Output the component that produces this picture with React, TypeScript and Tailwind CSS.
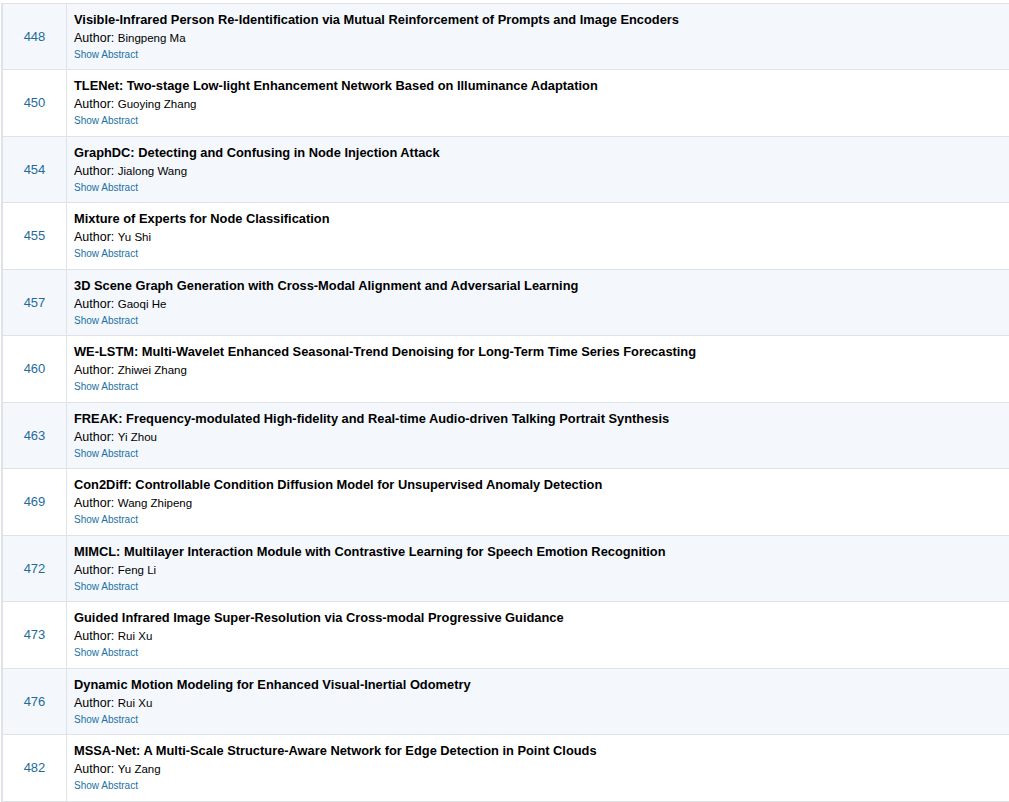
import React from "react"

const papers = [
  { id: 448, title: "Visible-Infrared Person Re-Identification via Mutual Reinforcement of Prompts and Image Encoders", author: "Bingpeng Ma" },
  { id: 450, title: "TLENet: Two-stage Low-light Enhancement Network Based on Illuminance Adaptation", author: "Guoying Zhang" },
  { id: 454, title: "GraphDC: Detecting and Confusing in Node Injection Attack", author: "Jialong Wang" },
  { id: 455, title: "Mixture of Experts for Node Classification", author: "Yu Shi" },
  { id: 457, title: "3D Scene Graph Generation with Cross-Modal Alignment and Adversarial Learning", author: "Gaoqi He" },
  { id: 460, title: "WE-LSTM: Multi-Wavelet Enhanced Seasonal-Trend Denoising for Long-Term Time Series Forecasting", author: "Zhiwei Zhang" },
  { id: 463, title: "FREAK: Frequency-modulated High-fidelity and Real-time Audio-driven Talking Portrait Synthesis", author: "Yi Zhou" },
  { id: 469, title: "Con2Diff: Controllable Condition Diffusion Model for Unsupervised Anomaly Detection", author: "Wang Zhipeng" },
  { id: 472, title: "MIMCL: Multilayer Interaction Module with Contrastive Learning for Speech Emotion Recognition", author: "Feng Li" },
  { id: 473, title: "Guided Infrared Image Super-Resolution via Cross-modal Progressive Guidance", author: "Rui Xu" },
  { id: 476, title: "Dynamic Motion Modeling for Enhanced Visual-Inertial Odometry", author: "Rui Xu" },
  { id: 482, title: "MSSA-Net: A Multi-Scale Structure-Aware Network for Edge Detection in Point Clouds", author: "Yu Zang" },
]

export default function App() {
  return (
    <div className="min-h-screen bg-white pt-[2.5px] pl-[1px] font-['Liberation_Sans',Arial,sans-serif]">
      <div className="border-l-2 border-b border-[#dfe3e8] w-[1020px]">
        {papers.map((paper, index) => (
          <div
            key={paper.id}
            className={`flex h-[66.5px] border-t border-[#dfe3e8] ${index % 2 === 0 ? "bg-[#f4f8fd]" : "bg-white"}`}
          >
            <div className="w-[64px] shrink-0 border-r border-[#dfe3e8] flex items-center justify-center text-[13px] text-[#1f6b9c]">
              {paper.id}
            </div>
            <div className="pl-[7px] pt-[8px] flex flex-col">
              <div className="text-[12.85px] leading-[16px] font-bold text-black">{paper.title}</div>
              <div className="mt-[1px] text-[12.5px] leading-[18px] text-black">
                Author: <span className="text-[11.5px]">{paper.author}</span>
              </div>
              <a href="#" className="mt-[1px] text-[10px] leading-[14px] text-[#2171a4]">
                Show Abstract
              </a>
            </div>
          </div>
        ))}
      </div>
    </div>
  )
}
